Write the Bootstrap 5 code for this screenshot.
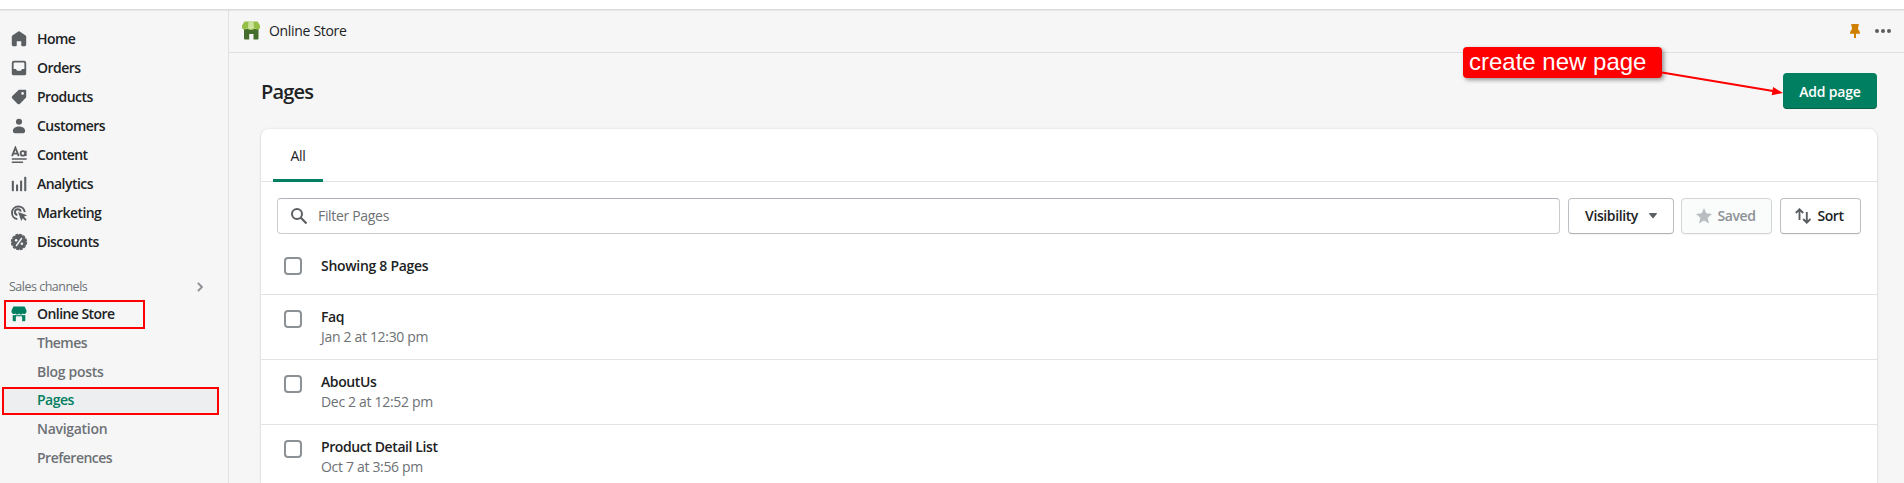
<!DOCTYPE html>
<html lang="en">
<head>
<meta charset="utf-8">
<meta name="viewport" content="width=device-width, initial-scale=1">
<title>Pages - Online Store</title>
<link href="https://cdn.jsdelivr.net/npm/bootstrap@5.3.0/dist/css/bootstrap.min.css" rel="stylesheet">
<style>
  body { font-family: "Open Sans", "Noto Sans", sans-serif; font-size: 14px; line-height: 20px; color: #202223; background: #f6f6f7; height: 483px; overflow: hidden; letter-spacing: -.32px; }
  svg { display: block; flex: none; }
  .strip { height: 10px; border-bottom: 1px solid #d9dadb; box-shadow: 0 1px 1px rgba(0,0,0,.05); position: relative; }
  .frame { height: 473px; }
  .side { width: 229px; border-right: 1px solid #dfe0e2; padding-top: 14px; }
  .side-link { height: 29px; padding-left: 10px; color: #202223; gap: 9px; font-weight: 600; letter-spacing: -.55px; text-decoration: none; }
  .side-link svg { fill: #5c5f62; }
  .channels { height: 26px; margin-top: 18px; padding: 0 25px 1px 9px; font-size: 12.5px; font-weight: 500; color: #6d7175; letter-spacing: -.5px; }
  .store-link { height: 29px; width: 141px; margin: 0 0 0 4px; padding: 0 0 1px 4px; border: 2px solid #f00; gap: 9px; }
  .store-link svg { fill: #008060; }
  .sub-link { height: 29px; padding: 0 0 2px 37px; color: #6d7175; font-weight: 600; letter-spacing: -.5px; text-decoration: none; }
  .sub-link.wide { letter-spacing: -.3px; }
  .sub-link.current { height: 28px; margin: 0 9px 0 2px; padding: 0 0 2px 33px; border: 2px solid #f00; background: #edeeef; color: #008060; }
  .app-head { height: 43px; border-bottom: 1px solid #dfe0e2; padding: 0 13px 0 11px; }
  .app-name { margin-left: 7px; }
  .page-body { padding: 20px 27px 0 32px; }
  .page-title { font-size: 20px; font-weight: 600; line-height: 28px; letter-spacing: -.8px; padding-top: 2px; }
  .btn { --bs-btn-font-size: 14px; --bs-btn-border-radius: 4px; line-height: 20px; height: 36px; padding: 0; font-weight: 600; letter-spacing: -.4px; }
  .btn-add { width: 94px; background: #008060; color: #fff; border: 0; box-shadow: inset 0 -1px 0 rgba(0,0,0,.25); letter-spacing: -.2px; padding-top: 1px; }
  .panel { --bs-card-border-width: 0; margin-top: 20px; height: 354px; overflow: hidden; border-radius: 8px 8px 0 0; box-shadow: 0 0 3px rgba(23,24,24,.1), 0 1px 2px rgba(0,0,0,.14); }
  .tabs { height: 53px; flex: none; border-bottom: 1px solid #e1e3e5; padding-left: 12px; }
  .tab-on { width: 50px; height: 53px; border-bottom: 3px solid #008060; border-radius: 2px 2px 0 0; padding-top: 4px; }
  .filters { padding: 16px 16px 0; }
  .search { height: 36px; border: 1px solid #c9cccf; border-top-color: #aeb4b9; border-radius: 4px; padding-left: 12px; gap: 10px; color: #6d7175; margin-right: 8px; }
  .btn-plain { background: #fff; border: 1px solid #babfc3; border-bottom-color: #b0b4b8; color: #202223; box-shadow: 0 1px 0 rgba(0,0,0,.04); }
  .btn-dim { background: #fafbfb; border-color: #d2d5d8; color: #8c9196; }
  .entry { height: 65px; flex: none; border-bottom: 1px solid #e1e3e5; padding: 12px 0 0 23px; }
  .entry.summary { height: 61px; padding-top: 20px; }
  .entry .form-check-input { width: 18px; height: 18px; margin: 3px 19px 0 0; border: 2px solid #8c9196; border-radius: 4px; flex: none; }
  .entry .summary-text { margin-top: 2px; letter-spacing: -.3px; }
  .entry b { font-weight: 600; display: block; letter-spacing: -.4px; }
  .entry small { font-size: 14px; color: #6d7175; display: block; }
  .note { position: absolute; left: 1463px; top: 47px; width: 199px; height: 31px; padding: 1px 0 0 6px; border-radius: 4px; background: #f00; color: #fff; font: 24px/28px "Liberation Sans", Arial, sans-serif; letter-spacing: 0; box-shadow: 2px 2px 4px rgba(0,0,0,.4); white-space: nowrap; }
  .arrow { position: absolute; left: 1660px; top: 65px; }
</style>
</head>
<body>
<div class="strip bg-white"></div>
<div class="frame d-flex">
  <nav class="side flex-shrink-0">
    <a class="side-link d-flex align-items-center"><svg width="18" height="18" viewBox="0 0 20 20"><path d="M18 7.3v9.2a1.5 1.5 0 0 1-1.5 1.5h-3a1 1 0 0 1-1-1v-4.5h-5V17a1 1 0 0 1-1 1h-3A1.5 1.5 0 0 1 2 16.500V7.300a1.500 1.500 0 0 1 .6-1.200l6.600-4.500a1.500 1.500 0 0 1 1.600 0l6.600 4.500a1.500 1.500 0 0 1 .6 1.200z"/></svg>Home</a>
    <a class="side-link d-flex align-items-center"><svg width="18" height="18" viewBox="0 0 20 20"><path fill-rule="evenodd" d="M4.500 2h11A2.500 2.500 0 0 1 18 4.500v12a1.500 1.500 0 0 1-1.500 1.500h-13A1.500 1.500 0 0 1 2 16.500v-12A2.500 2.500 0 0 1 4.500 2zM5 4a1 1 0 0 0-1 1v6h2.500c.7 0 .8 2 1.700 2h3.600c.9 0 1-2 1.700-2H16V5a1 1 0 0 0-1-1z"/></svg>Orders</a>
    <a class="side-link d-flex align-items-center"><svg width="18" height="18" viewBox="0 0 20 20"><path fill-rule="evenodd" d="M10.300 2H17a1 1 0 0 1 1 1v6.700c0 .4-.2.8-.4 1.100l-6.500 6.600a2 2 0 0 1-2.800 0l-5.700-5.700a2 2 0 0 1 0-2.800l6.600-6.500c.3-.3.700-.4 1.100-.4zM14 7.500a1.500 1.500 0 1 0 0-3 1.500 1.500 0 0 0 0 3z"/></svg>Products</a>
    <a class="side-link d-flex align-items-center"><svg width="18" height="18" viewBox="0 0 20 20"><circle cx="10" cy="5.300" r="3.400"/><path d="M10 10.500c3.500 0 6.800 1.700 6.800 4.700 0 1.600-.8 2.800-2.200 2.800H5.400c-1.400 0-2.200-1.200-2.200-2.800 0-3 3.300-4.700 6.800-4.700z"/></svg>Customers</a>
    <a class="side-link d-flex align-items-center"><svg width="18" height="18" viewBox="0 0 20 20"><path d="M2.300 11.200 6 1.800l3.700 9.400M3.600 8.500h4.800M17.500 5.200v6" fill="none" stroke="#5c5f62" stroke-width="2"/><circle cx="14.300" cy="8.200" r="2.500" fill="none" stroke="#5c5f62" stroke-width="2"/><path d="M2 13.500h16.500v1.800H2zM2 17.100h12.500v1.800H2z"/></svg>Content</a>
    <a class="side-link d-flex align-items-center"><svg width="18" height="18" viewBox="0 0 20 20"><rect x="2" y="6.500" width="2.300" height="11.500" rx=".7"/><rect x="6.700" y="10.500" width="2.300" height="7.500" rx=".7"/><rect x="11.200" y="6" width="2.300" height="12" rx=".7"/><rect x="15.800" y="2" width="2.300" height="16" rx=".7"/></svg>Analytics</a>
    <a class="side-link d-flex align-items-center"><svg width="18" height="18" viewBox="0 0 20 20"><path d="M8.200 16.800A7.100 7.100 0 1 1 16.400 9M8.200 12.300A3.300 3.300 0 1 1 12 8.300" fill="none" stroke="#5c5f62" stroke-width="2.200"/><path d="m9 9 10 3.500-3.500 1.800 3 3-1.400 1.400-3-3L12.500 19z"/></svg>Marketing</a>
    <a class="side-link d-flex align-items-center"><svg width="18" height="18" viewBox="0 0 20 20"><circle cx="10" cy="10" r="8.300"/><circle cx="10" cy="10" r="8.500" fill="none" stroke="#5c5f62" stroke-width="1.200" stroke-dasharray="3.300 1.150"/><path d="M13.200 5.600 6.800 14.400" stroke="#f6f6f7" stroke-width="1.600"/><circle cx="6.800" cy="8" r="1.400" fill="#f6f6f7"/><circle cx="13.200" cy="12" r="1.400" fill="#f6f6f7"/></svg>Discounts</a>
    <div class="channels d-flex align-items-center justify-content-between">Sales channels<svg width="6" height="10" viewBox="0 0 6 10"><path d="m.9.800 4 4.200-4 4.200" fill="none" stroke="#8c9196" stroke-width="1.900"/></svg></div>
    <a class="side-link store-link d-flex align-items-center"><svg width="18" height="18" viewBox="0 0 20 20"><path d="M3.800 1.800h12.400L18.300 6v1.500a2.600 2.600 0 0 1-4.200 2 2.700 2.700 0 0 1-4.100 0 2.700 2.700 0 0 1-4.100 0 2.600 2.600 0 0 1-4.200-2V6zM3 11.200c1.100.3 2.200.1 3-.5 1.200.8 2.800.8 4 0 1.200.8 2.800.8 4 0 .8.600 1.900.8 3 .5V17a1 1 0 0 1-1 1h-2.500v-4.500a1 1 0 0 0-1-1h-5a1 1 0 0 0-1 1V18H4a1 1 0 0 1-1-1z"/></svg>Online Store</a>
    <a class="sub-link d-flex align-items-center">Themes</a>
    <a class="sub-link wide d-flex align-items-center">Blog posts</a>
    <a class="sub-link current d-flex align-items-center">Pages</a>
    <a class="sub-link wide d-flex align-items-center">Navigation</a>
    <a class="sub-link d-flex align-items-center">Preferences</a>
  </nav>
  <main class="flex-grow-1">
    <header class="app-head d-flex align-items-center">
      <svg width="22" height="22" viewBox="0 0 22 22"><path d="M4 9h14.500v9.500a1 1 0 0 1-1 1h-4V14H9.200v5.500H5a1 1 0 0 1-1-1z" fill="#456d2e"/><path d="M4.500 1.500h13L20 5.500V7c0 3.200-4 3.300-4.700 1.200C14.500 10.300 7.500 10.300 6.800 8.200 6 10.300 2 10.200 2 7V5.500z" fill="#95bf47"/><path d="M8.500 1.500h5L14 7.300c0 3-6 3-6 0z" fill="#cbe39a"/></svg>
      <span class="app-name">Online Store</span>
      <span class="ms-auto d-flex align-items-center">
        <svg width="10" height="15" viewBox="0 0 10 15" style="margin-right:15px"><path d="M1.300 0h7.400v2l-.6 1v2.500c1.200 1 1.900 2.200 1.900 4.300H6V14H4V9.800H0c0-2.100.7-3.300 1.900-4.300V3l-.6-1z" fill="#d08000"/></svg>
        <svg width="16" height="4" viewBox="0 0 16 4" fill="#5c5f62"><circle cx="2" cy="2" r="2"/><circle cx="8" cy="2" r="2"/><circle cx="14" cy="2" r="2"/></svg>
      </span>
    </header>
    <div class="page-body">
      <div class="d-flex align-items-center justify-content-between">
        <h1 class="page-title m-0">Pages</h1>
        <button class="btn btn-add">Add page</button>
      </div>
      <section class="card panel">
        <div class="tabs"><div class="tab-on d-flex align-items-center justify-content-center">All</div></div>
        <div class="filters d-flex">
          <div class="search d-flex align-items-center flex-grow-1"><svg width="18" height="18" viewBox="0 0 18 18"><circle cx="7" cy="7" r="5" fill="none" stroke="#5c5f62" stroke-width="2"/><path d="m10.800 10.800 5.700 5.700" stroke="#5c5f62" stroke-width="2.200"/></svg>Filter Pages</div>
          <button class="btn btn-plain d-flex align-items-center justify-content-center" style="width:106px;margin-right:7px">Visibility<svg width="8" height="6" viewBox="0 0 8 6" style="margin-left:11px"><path d="M.7 0h6.600c.6 0 .9.600.5 1L4.500 5.100a.7.700 0 0 1-1 0L.2 1C-.2.600.1 0 .7 0z" fill="#5c5f62"/></svg></button>
          <button class="btn btn-plain btn-dim d-flex align-items-center justify-content-center" style="width:91px;margin-right:8px"><svg width="16" height="16" viewBox="0 0 16 16" style="margin:0 5px 0 -1px"><path d="m8 0 2.300 5.300 5.700.6-4.300 3.800L13 15.500l-5-3-5 3 1.300-5.800L0 5.900l5.700-.6z" fill="#babec3"/></svg>Saved</button>
          <button class="btn btn-plain d-flex align-items-center justify-content-center" style="width:81px"><svg width="16" height="16" viewBox="0 0 16 16" style="margin:0 6px 0 -2px" fill="none" stroke="#5c5f62" stroke-width="1.900"><path d="M4.500 12V1.500M.8 5l3.700-3.700L8.200 5M11.800 4v10.500M8.200 11l3.600 3.700 3.700-3.700"/></svg>Sort</button>
        </div>
        <div class="entry summary d-flex"><input type="checkbox" class="form-check-input"><b class="summary-text">Showing 8 Pages</b></div>
        <div class="entry d-flex"><input type="checkbox" class="form-check-input"><div><b>Faq</b><small>Jan 2 at 12:30 pm</small></div></div>
        <div class="entry d-flex"><input type="checkbox" class="form-check-input"><div><b>AboutUs</b><small>Dec 2 at 12:52 pm</small></div></div>
        <div class="entry d-flex"><input type="checkbox" class="form-check-input"><div><b>Product Detail List</b><small>Oct 7 at 3:56 pm</small></div></div>
      </section>
    </div>
  </main>
</div>
<div class="note">create new page</div>
<svg class="arrow" width="124" height="36" viewBox="0 0 124 36"><path d="M2 7.500 113 26" stroke="#f00" stroke-width="2"/><path d="m123 28-11.300 2.200 1.400-8.300z" fill="#f00"/></svg>
<script src="https://cdn.jsdelivr.net/npm/bootstrap@5.3.0/dist/js/bootstrap.bundle.min.js"></script>
</body>
</html>
